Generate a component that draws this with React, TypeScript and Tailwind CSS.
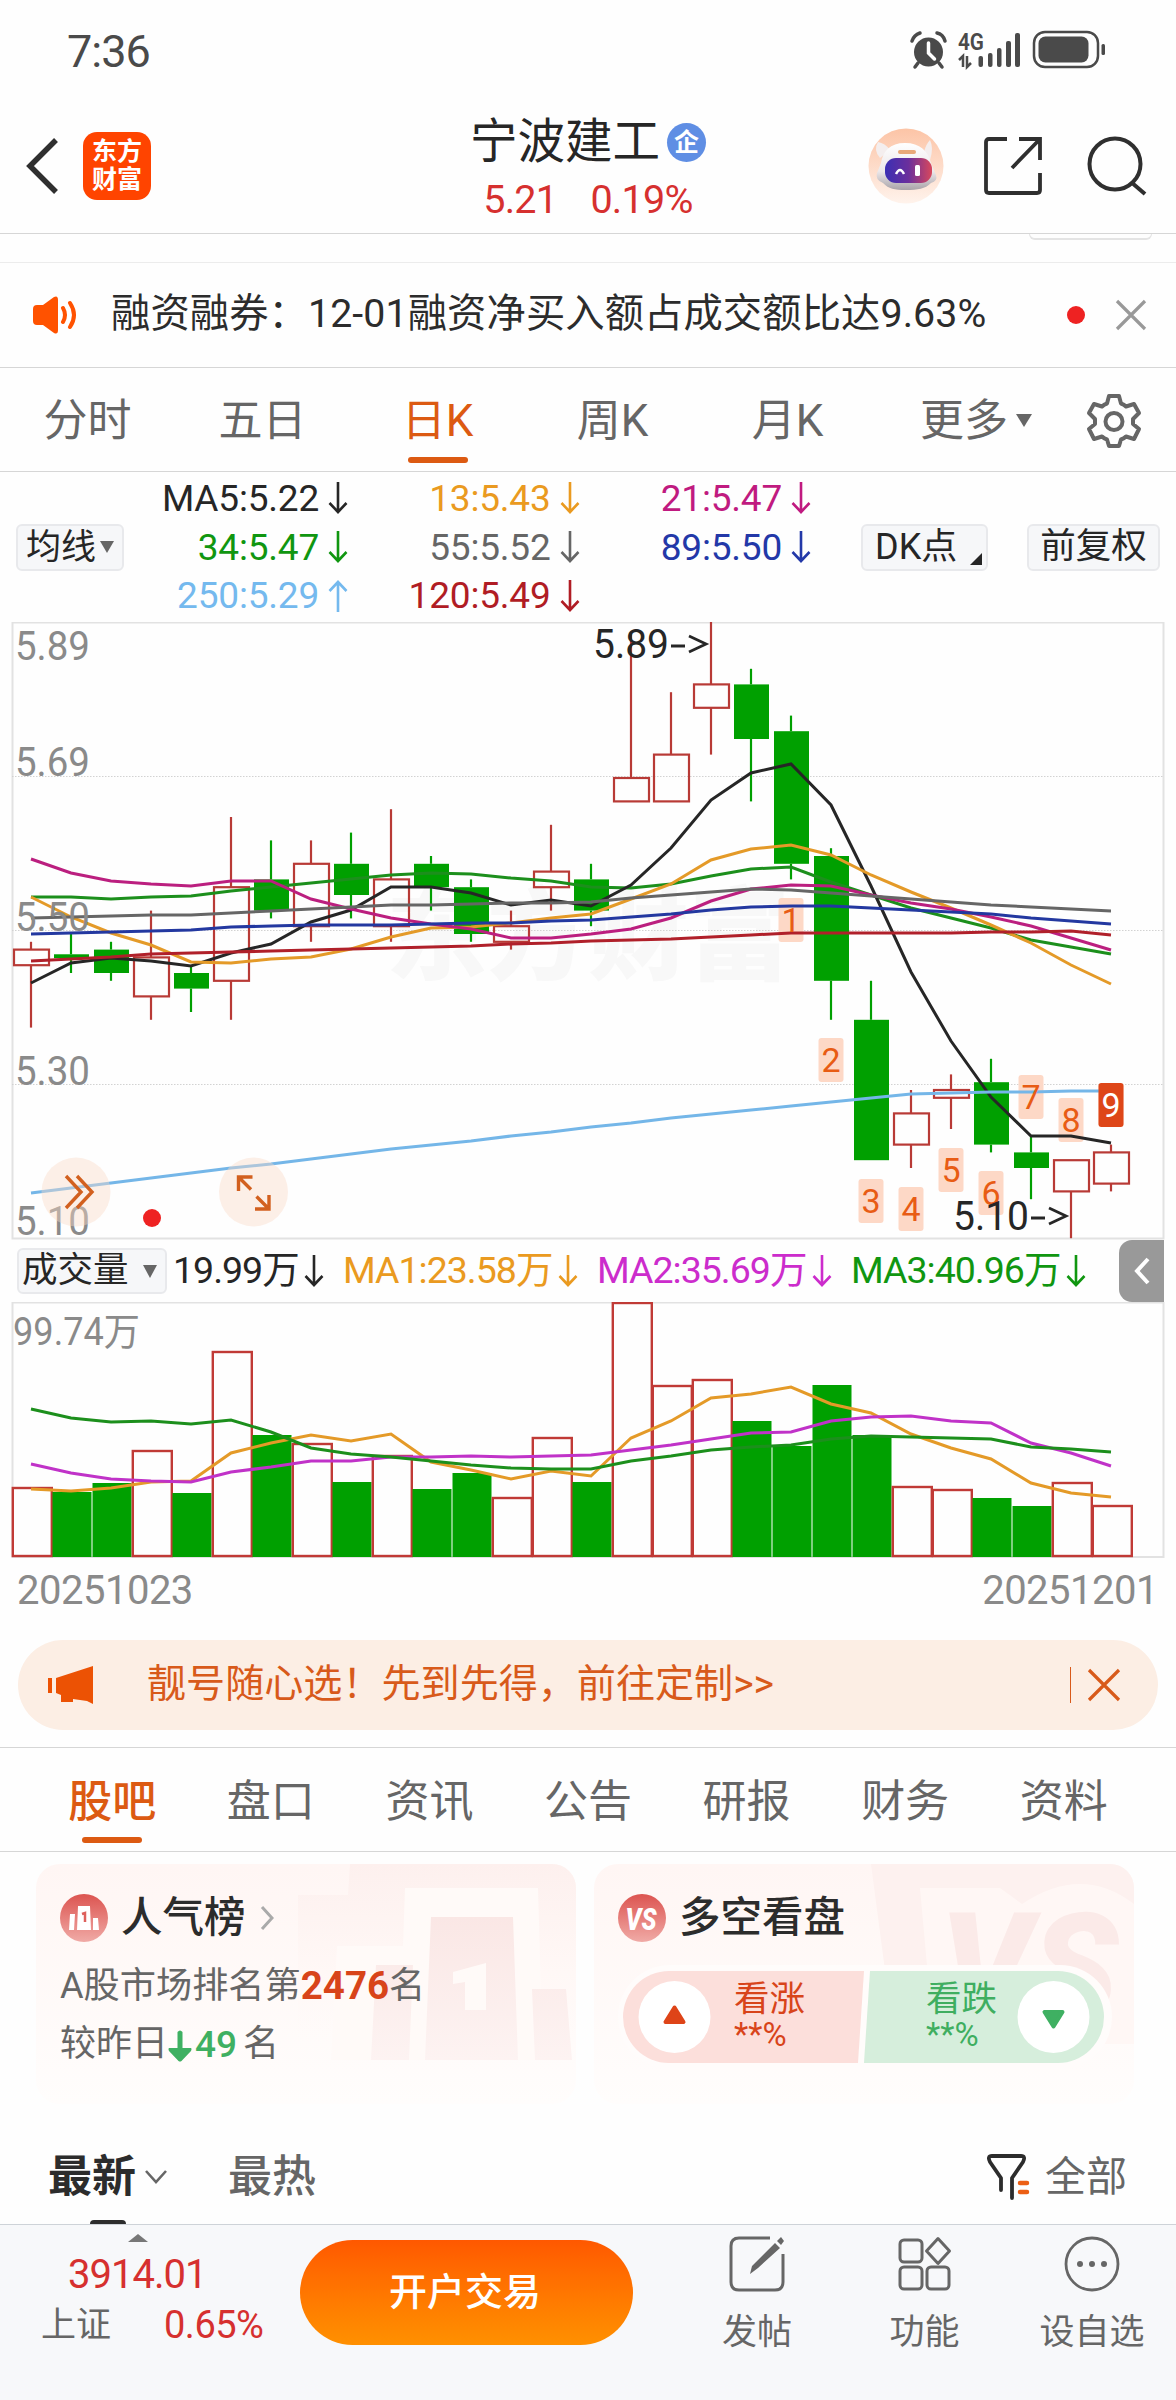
import React from 'react';

type Direction = 'up' | 'down';

interface Candle {
  open: number;
  close: number;
  high: number;
  low: number;
  volTop: number;
}

const STEP = 40;
const PRICE_TOP = 5.89;
const PX_PER_PRICE = 780;

const RED = '#b83a36';
const GREEN = '#00a000';

// [open, close, high, low, top of the volume bar]
const rawCandles: number[][] = [
  [5.45, 5.47, 5.48, 5.37, 186],
  [5.464, 5.459, 5.49, 5.44, 190],
  [5.47, 5.44, 5.48, 5.43, 181],
  [5.41, 5.46, 5.52, 5.38, 149],
  [5.44, 5.42, 5.45, 5.39, 191],
  [5.43, 5.55, 5.64, 5.38, 50],
  [5.56, 5.52, 5.61, 5.51, 133],
  [5.5, 5.58, 5.61, 5.48, 142],
  [5.58, 5.54, 5.62, 5.51, 180],
  [5.5, 5.56, 5.65, 5.48, 154],
  [5.58, 5.55, 5.59, 5.52, 187],
  [5.55, 5.49, 5.56, 5.48, 171],
  [5.48, 5.5, 5.52, 5.47, 196],
  [5.55, 5.57, 5.63, 5.52, 136],
  [5.56, 5.52, 5.58, 5.5, 180],
  [5.66, 5.69, 5.875, 5.66, 1],
  [5.66, 5.72, 5.8, 5.66, 84],
  [5.78, 5.81, 5.89, 5.72, 78],
  [5.81, 5.74, 5.83, 5.66, 119],
  [5.75, 5.58, 5.77, 5.56, 144],
  [5.59, 5.43, 5.6, 5.38, 83],
  [5.38, 5.2, 5.43, 5.2, 133],
  [5.22, 5.26, 5.29, 5.19, 185],
  [5.28, 5.29, 5.31, 5.24, 188],
  [5.3, 5.22, 5.33, 5.21, 196],
  [5.21, 5.19, 5.23, 5.15, 204],
  [5.16, 5.2, 5.2, 5.1, 181],
  [5.17, 5.21, 5.22, 5.16, 204],
];

const candles: Candle[] = rawCandles.map(([open, close, high, low, volTop]) => ({ open, close, high, low, volTop }));

const priceLines: { color: string; ys: number[] }[] = [
  { color: '#1c8f1c', ys: [275, 275, 277, 275, 274, 269, 265, 261, 257, 253, 251, 252, 256, 259, 265, 266, 262, 254, 247, 245, 260, 273, 286, 296, 306, 318, 325, 332] },
  { color: '#262626', ys: [361, 341, 336, 339, 344, 331, 322, 300, 288, 265, 265, 271, 283, 278, 284, 263, 226, 178, 151, 142, 183, 264, 350, 419, 475, 514, 514, 521] },
  { color: '#e49a28', ys: [275, 295, 311, 323, 340, 341, 337, 335, 327, 315, 306, 305, 301, 296, 292, 277, 262, 238, 227, 223, 233, 253, 270, 286, 303, 321, 343, 362] },
  { color: '#bb1f7f', ys: [237, 251, 259, 262, 264, 259, 259, 277, 287, 296, 302, 307, 316, 316, 312, 307, 296, 279, 267, 263, 264, 273, 281, 287, 295, 304, 316, 328] },
  { color: '#666666', ys: [296, 295, 294, 293, 293, 291, 289, 287, 285, 283, 283, 282, 281, 281, 280, 276, 273, 270, 267, 268, 271, 274, 277, 280, 283, 285, 287, 289] },
  { color: '#2338a0', ys: [312, 311, 310, 309, 308, 305, 304, 303, 303, 303, 302, 301, 301, 299, 298, 295, 292, 288, 285, 284, 284, 286, 288, 290, 292, 296, 299, 302] },
  { color: '#b0202a', ys: [339, 337, 335, 332, 331, 330, 329, 328, 327, 326, 325, 324, 322, 321, 319, 318, 317, 315, 313, 311, 311, 311, 311, 311, 310, 310, 309, 313] },
  { color: '#74b6e8', ys: [571, 566, 561, 556, 551, 546, 542, 537, 532, 527, 523, 519, 514, 510, 505, 501, 496, 492, 488, 484, 480, 476, 472, 471, 470, 470, 469, 469] },
];

const volumeLines: { color: string; ys: number[] }[] = [
  { color: '#e49a28', ys: [187, 189, 186, 180, 179, 151, 141, 133, 139, 132, 160, 168, 177, 169, 174, 136, 119, 96, 92, 85, 102, 111, 132, 146, 157, 181, 191, 195] },
  { color: '#c032c8', ys: [162, 171, 177, 179, 180, 170, 165, 159, 159, 155, 155, 154, 155, 154, 153, 148, 143, 137, 131, 130, 119, 115, 114, 119, 121, 141, 151, 164] },
  { color: '#1c8f1c', ys: [107, 116, 120, 119, 122, 118, 130, 146, 152, 155, 159, 163, 166, 167, 167, 159, 154, 148, 145, 143, 137, 134, 135, 136, 137, 145, 147, 150] },
];

// Sequence marks under / over the candles: index of the candle and top edge
const marks = [
  { n: 1, i: 19, y: 276 },
  { n: 2, i: 20, y: 416 },
  { n: 3, i: 21, y: 557 },
  { n: 4, i: 22, y: 565 },
  { n: 5, i: 23, y: 526 },
  { n: 6, i: 24, y: 549 },
  { n: 7, i: 25, y: 453 },
  { n: 8, i: 26, y: 476 },
  { n: 9, i: 27, y: 461 },
];

const axisLabels = [
  { label: '5.89', y: 38 },
  { label: '5.69', y: 154 },
  { label: '5.50', y: 309 },
  { label: '5.30', y: 463 },
  { label: '5.10', y: 613 },
];

const cx = (i: number) => 31 + i * STEP;
const py = (p: number) => (PRICE_TOP - p) * PX_PER_PRICE;
const toPoints = (ys: number[]) => ys.map((y, i) => `${cx(i)},${y}`).join(' ');

const Arrow: React.FC<{ dir?: Direction; className?: string }> = ({ dir = 'down', className = '' }) => (
  <svg viewBox="0 0 20 32" fill="none" stroke="currentColor" strokeWidth="2.6" className={`h-8 w-5 shrink-0 ${className}`}>
    {dir === 'down' ? <path d="M10 0v30M1.500 21l8.500 9 8.500-9" /> : <path d="M10 32V2M1.500 11L10 2l8.500 9" />}
  </svg>
);

const StatusBar = () => (
  <div className="flex h-[100px] items-center justify-between pl-[67px] pr-[71px] text-[#4a4a4a]">
    <span className="pt-[2px] text-[45px] leading-none tracking-[-1px]">7:36</span>
    <svg viewBox="0 0 196 40" className="h-10 w-[196px]">
      <g fill="#4a4a4a">
        <circle cx="19.500" cy="22" r="14.500" />
        <path d="M3 11q2-6 8-8M28 3q6 1 8 8M9 33l-3 4M30 33l3 4" stroke="#4a4a4a" strokeWidth="3.500" fill="none" strokeLinecap="round" />
        <path d="M19.500 13v10l6 6" stroke="#fff" strokeWidth="3.500" fill="none" strokeLinecap="round" />
        <rect x="69.500" y="26" width="4.500" height="11" rx="2" />
        <rect x="79" y="23" width="4.500" height="14" rx="2" />
        <rect x="88" y="18" width="4.500" height="19" rx="2" />
        <rect x="97" y="11" width="5" height="26" rx="2" />
        <rect x="106" y="3" width="5" height="34" rx="2" />
        <rect x="125" y="2" width="64" height="35" rx="11" fill="none" stroke="#4a4a4a" strokeWidth="2.500" />
        <rect x="129.500" y="6.500" width="50" height="26" rx="7" />
        <rect x="192.500" y="14" width="3.500" height="11" rx="1.500" />
        <path d="M50 30l4-4v11M58 26v11l4-4" stroke="#4a4a4a" strokeWidth="2.500" fill="none" />
      </g>
      <text x="49" y="20" fontSize="23" fontWeight="600" fill="#4a4a4a" textLength="26" lengthAdjust="spacingAndGlyphs">4G</text>
    </svg>
  </div>
);

const Header = () => (
  <header className="grid h-[134px] grid-cols-[1fr_auto_1fr] items-start border-b border-[#d6d6d6]">
    <div className="flex items-center gap-[25px] pl-[26px] pt-8">
      <svg viewBox="0 0 32 56" fill="none" stroke="#2f2f2f" strokeWidth="5.500" className="h-14 w-8">
        <path d="M30 2L4 28l26 26" />
      </svg>
      <div className="flex h-[68px] w-[68px] flex-col items-center justify-center rounded-[14px] bg-[#ff4400] text-[25px] font-bold leading-[28px] text-white">
        <span>东方</span>
        <span>财富</span>
      </div>
    </div>
    <div className="flex flex-col items-center">
      <div className="flex items-center gap-[7px] pt-[18px]">
        <h1 className="text-[47.5px] leading-[48px] text-[#262626]">宁波建工</h1>
        <span className="flex h-[39px] w-[39px] items-center justify-center rounded-full bg-[#5f8ee4] text-[25px] font-bold leading-none text-white">企</span>
      </div>
      <div className="mt-[14px] flex gap-[33px] text-[39.5px] leading-10 tracking-[-0.7px] text-[#d6302f]">
        <span>5.21</span>
        <span>0.19%</span>
      </div>
    </div>
    <div className="flex items-center justify-end pr-[29px] pt-[28px]">
      <svg viewBox="0 0 76 76" className="h-[76px] w-[76px]">
        <defs>
          <linearGradient id="halo" x1="0" y1="0" x2="0" y2="1">
            <stop offset="0" stopColor="#fcc4a6" />
            <stop offset="1" stopColor="#fff3ec" />
          </linearGradient>
          <linearGradient id="shell" x1="0" y1="0" x2="0" y2="1">
            <stop offset="0" stopColor="#ffffff" />
            <stop offset="0.6" stopColor="#ece8ea" />
            <stop offset="1" stopColor="#a9a3a8" />
          </linearGradient>
          <linearGradient id="visor" x1="0" y1="0" x2="1" y2="0">
            <stop offset="0" stopColor="#3b2fb4" />
            <stop offset="0.5" stopColor="#6b2f9c" />
            <stop offset="1" stopColor="#d8485c" />
          </linearGradient>
        </defs>
        <circle cx="38" cy="38" r="37.500" fill="url(#halo)" />
        <path d="M12 30q-7-8-2-16 7 1 12 8zM56 24q2-8 6-12 4 8 0 20z" fill="#f4eeee" />
        <path d="M37 15c15 0 23 8 26 20l5 12q2 6-5 8c-6 6-13 7-25 7s-17-1-23-7q-8-3-6-10l4-10c2-12 9-20 24-20z" fill="url(#shell)" />
        <rect x="17" y="30" width="47" height="25" rx="11" fill="url(#visor)" />
        <path d="M28 46q4-8 8 0" stroke="#fff" strokeWidth="2.500" fill="none" />
        <rect x="47" y="37" width="5" height="11" rx="1.500" fill="#fff" />
        <rect x="30" y="22" width="18" height="4" rx="2" fill="#e8a878" />
      </svg>
      <svg viewBox="0 0 58 58" fill="none" stroke="#2f2f2f" strokeWidth="3.800" className="ml-[40px] h-[58px] w-[58px]">
        <path d="M23 2H5q-3 0-3 3v48q0 3 3 3h48q3 0 3-3V36M35 2h21v21M56 2L28 31" />
      </svg>
      <svg viewBox="0 0 60 60" fill="none" stroke="#2f2f2f" strokeWidth="4" className="ml-[45px] h-[60px] w-[60px]">
        <circle cx="28" cy="28" r="25.500" />
        <path d="M44 46l14 12" />
      </svg>
    </div>
  </header>
);

const NoticeBar = () => (
  <div className="flex h-[105px] items-center border-b border-[#d6d6d6] pl-[33px] pr-[29px]">
    <svg viewBox="0 0 46 38" className="h-[38px] w-[46px]">
      <path d="M4 9h6L21 1q4-2 4 3v30q0 5-4 3L10 29H4q-4 0-4-4V13q0-4 4-4z" fill="#ff5200" />
      <path d="M30 12q4 7 0 14M37 7q8 12 0 24" fill="none" stroke="#ff5200" strokeWidth="4" strokeLinecap="round" />
    </svg>
    <p className="ml-8 whitespace-nowrap text-[39.3px] leading-none tracking-[0.1px] text-[#2c2c2c]">融资融券：12-01融资净买入额占成交额比达9.63%</p>
    <span className="ml-auto h-[18px] w-[18px] rounded-full bg-[#ee2222]" />
    <svg viewBox="0 0 32 32" fill="none" stroke="#999" strokeWidth="3.200" className="ml-[30px] h-8 w-8">
      <path d="M2 2l28 28M30 2L2 30" />
    </svg>
  </div>
);

const periods = ['分时', '五日', '日K', '周K', '月K'];

const PeriodTabs = () => (
  <nav className="flex h-[104px] items-stretch border-b border-[#d6d6d6] text-[44px] leading-none text-[#666]">
    {periods.map((p) => {
      const active = p === '日K';
      return (
        <div key={p} className={`relative flex w-[175px] items-center justify-center pt-[2px] ${active ? 'text-[#dc5a12]' : ''}`}>
          <span>{p}</span>
          {active && <span className="absolute bottom-2 h-[6px] w-[60px] rounded-full bg-[#dc5a12]" />}
        </div>
      );
    })}
    <div className="flex flex-1 items-center pl-[45px] pt-[2px]">
      <span>更多</span>
      <svg viewBox="0 0 16 13" className="ml-2 h-[13px] w-4">
        <path d="M0 0h16L8 13z" fill="#666" />
      </svg>
      <svg viewBox="0 0 56 56" fill="none" stroke="#666" strokeWidth="4" strokeLinejoin="round" className="ml-[54px] h-14 w-14">
        <path d="M23 3h10l2 7.500q3 1 5 3l8-2.500 5 9-6 6v5l6 5-5 10-8-2.500q-2 2-5 3L33 53H23l-2-6.500q-3-1-5-3L8 46l-5-10 6-5v-5l-6-6 5-9 8 2.500q2-2 5-3z" />
        <circle cx="28" cy="28.500" r="8.500" />
      </svg>
    </div>
  </nav>
);

const maColumns: { text: string; color: string; dir: Direction }[][] = [
  [
    { text: 'MA5:5.22', color: 'text-[#262626]', dir: 'down' },
    { text: '34:5.47', color: 'text-[#109610]', dir: 'down' },
    { text: '250:5.29', color: 'text-[#74b9ee]', dir: 'up' },
  ],
  [
    { text: '13:5.43', color: 'text-[#ea9a20]', dir: 'down' },
    { text: '55:5.52', color: 'text-[#666666]', dir: 'down' },
    { text: '120:5.49', color: 'text-[#b01c24]', dir: 'down' },
  ],
  [
    { text: '21:5.47', color: 'text-[#c01a80]', dir: 'down' },
    { text: '89:5.50', color: 'text-[#2338a8]', dir: 'down' },
  ],
];

const MaPanel = () => (
  <div className="flex h-[150px] items-center px-4">
    <button className="flex h-[47px] w-[108px] items-center justify-center gap-1 rounded-md border-2 border-[#e8e9ec] bg-[#f6f7f9] text-[35px] leading-none text-[#262626]">
      均线
      <svg viewBox="0 0 14 12" className="h-3 w-[14px]">
        <path d="M0 0h14L7 12z" fill="#666" />
      </svg>
    </button>
    <div className="flex h-full pt-[2px]">
      {maColumns.map((col, c) => (
        <div key={c} className={c === 0 ? 'w-[224px]' : 'w-[231.5px]'}>
          {col.map((m) => (
            <div key={m.text} className={`flex h-[48.7px] items-center justify-end gap-[9px] text-[37px] leading-none tracking-[-0.2px] ${m.color}`}>
              <span>{m.text}</span>
              <Arrow dir={m.dir} />
            </div>
          ))}
        </div>
      ))}
    </div>
    <button className="relative ml-[50px] flex h-[47px] w-[127px] items-center rounded-md border-2 border-[#e8e9ec] bg-[#f6f7f9] pl-[12px] text-[36px] leading-none text-[#262626]">
      DK点
      <svg viewBox="0 0 12 12" className="absolute bottom-1 right-1 h-3 w-3">
        <path d="M12 0v12H0z" fill="#262626" />
      </svg>
    </button>
    <button className="ml-auto flex h-[47px] w-[133px] items-center justify-center whitespace-nowrap rounded-md border-2 border-[#e8e9ec] bg-[#f6f7f9] text-[35.5px] leading-none text-[#262626]">前复权</button>
  </div>
);

const KLineChart = () => (
  <svg viewBox="0 0 1176 618" className="block h-[618px] w-[1176px]">
    <text x="588" y="350" textAnchor="middle" fontSize="101" fontWeight="900" fill="#f8f8f8">东方财富</text>
    <rect x="12.500" y="0.500" width="1151" height="616" fill="none" stroke="#e2e2e2" strokeWidth="2" />
    {[154.5, 308.5, 462.5].map((y) => (
      <line key={y} x1="12" x2="1163" y1={y} y2={y} stroke="#d2d2d2" strokeDasharray="1.5 1.5" />
    ))}

    {marks.map((m) => (
      <rect key={m.n} x={cx(m.i) - 12.5} y={m.y} width="25" height="44" rx="3" fill="#fdd8c6" />
    ))}

    {candles.map((c, i) => {
      const up = c.close > c.open;
      const top = py(Math.max(c.open, c.close));
      const bottom = py(Math.min(c.open, c.close));
      return (
        <g key={i} stroke={up ? RED : GREEN} strokeWidth="2.2">
          <line x1={cx(i)} x2={cx(i)} y1={py(c.high)} y2={top} />
          <line x1={cx(i)} x2={cx(i)} y1={bottom} y2={py(c.low)} />
          {up ? (
            <rect x={cx(i) - 17} y={top} width="35" height={bottom - top} fill="none" />
          ) : (
            <rect x={cx(i) - 17} y={top} width="35" height={bottom - top} fill={GREEN} stroke="none" />
          )}
        </g>
      );
    })}

    {priceLines.map((l) => (
      <polyline key={l.color} points={toPoints(l.ys)} fill="none" stroke={l.color} strokeWidth="3" />
    ))}

    {/* mark 9 stays above the 250 line */}
    <rect x={cx(27) - 12.5} y="461" width="25" height="44" rx="3" fill="#de4618" />
    {marks.map((m) => (
      <text key={m.n} x={cx(m.i)} y={m.y + 34} textAnchor="middle" fontSize="34" fill={m.n === 9 ? '#fff' : '#e85c14'}>{m.n}</text>
    ))}

    <g fontSize="40" fill="#8a8a8a">
      {axisLabels.map((a) => (
        <text key={a.label} x="15" y={a.y} textLength="75" lengthAdjust="spacingAndGlyphs">{a.label}</text>
      ))}
    </g>
    <g fontSize="40" fill="#262626">
      <text x="593" y="36" textLength="76" lengthAdjust="spacingAndGlyphs">5.89</text>
      <text x="953" y="608" textLength="76" lengthAdjust="spacingAndGlyphs">5.10</text>
    </g>
    <path d="M671 24h14M689 14l17 8-17 8M1031 596h14M1049 586l17 8-17 8" fill="none" stroke="#262626" strokeWidth="2.800" />

    <g fill="#fbdcc8" fillOpacity="0.420">
      <circle cx="76" cy="570" r="34.500" />
      <circle cx="253.500" cy="570" r="34.500" />
    </g>
    <g fill="none" stroke="#d2601f" strokeWidth="3.400">
      <path d="M66 554l15 16-15 16M77 554l15 16-15 16" />
      <path d="M238.500 569v-14h14M239 555.500l12 12M269 573v14h-14M268.500 586.500l-12-12" />
    </g>
    <circle cx="152" cy="596" r="9" fill="#ee2222" />
  </svg>
);

const volumeLegend = [
  { text: '19.99万', color: 'text-[#262626]', width: 'w-[151px]' },
  { text: 'MA1:23.58万', color: 'text-[#ea9a20]', width: 'w-[235px]' },
  { text: 'MA2:35.69万', color: 'text-[#cc2ccc]', width: 'w-[235px]' },
  { text: 'MA3:40.96万', color: 'text-[#109610]', width: 'w-[235px]' },
];

const VolumeHeader = () => (
  <div className="flex h-[62px] items-center pl-[17px] pr-3">
    <button className="flex h-[46px] w-[150px] items-center justify-between whitespace-nowrap rounded-md border-2 border-[#e8e9ec] bg-[#f6f7f9] pl-[3px] pr-2 text-[35.5px] leading-none text-[#262626]">
      成交量
      <svg viewBox="0 0 14 13" className="h-[13px] w-[14px]">
        <path d="M0 0h14L7 13z" fill="#666" />
      </svg>
    </button>
    <div className="ml-[6px] flex gap-[19px]">
      {volumeLegend.map((v) => (
        <div key={v.text} className={`flex items-center justify-between whitespace-nowrap text-[37.5px] leading-none tracking-[-1px] ${v.color} ${v.width}`}>
          <span>{v.text}</span>
          <Arrow />
        </div>
      ))}
    </div>
    <button className="ml-auto flex h-[62px] w-[45px] items-center justify-center rounded-l-[13px] bg-[#999]">
      <svg viewBox="0 0 16 28" fill="none" stroke="#fff" strokeWidth="4" className="h-7 w-4">
        <path d="M14 2L3 14l11 12" />
      </svg>
    </button>
  </div>
);

const VolumeChart = () => (
  <svg viewBox="0 0 1176 256" className="block h-[256px] w-[1176px]">
    <rect x="12.500" y="0.500" width="1151" height="254.500" fill="none" stroke="#e2e2e2" strokeWidth="2" />
    {candles.map((c, i) => {
      const x = 12 + i * STEP;
      return c.close > c.open ? (
        <rect key={i} x={x + 0.8} y={c.volTop} width="39" height={254 - c.volTop} fill="none" stroke="#c03a36" strokeWidth="2.4" />
      ) : (
        <rect key={i} x={x + 0.5} y={c.volTop} width="39" height={255 - c.volTop} fill={GREEN} />
      );
    })}
    {volumeLines.map((l) => (
      <polyline key={l.color} points={toPoints(l.ys)} fill="none" stroke={l.color} strokeWidth="3" />
    ))}
    <text x="13" y="43" fontSize="38" fill="#8a8a8a" textLength="127" lengthAdjust="spacingAndGlyphs">99.74万</text>
  </svg>
);

const PromoBanner = () => (
  <div className="mx-[18px] mt-[22px] flex h-[90px] items-center rounded-full bg-[#fceee4] pl-[29px] pr-[37px] text-[#d85a1a]">
    <svg viewBox="0 0 48 40" className="h-10 w-12" fill="#ec5204">
      <path d="M1 13h4v15H1zM9 13L46 1v38l-6-3-14-2v3H14v-7l-5-2z" />
    </svg>
    <span className="ml-[52px] text-[39.1px] leading-none">靓号随心选！先到先得，前往定制&gt;&gt;</span>
    <span className="ml-auto h-9 w-px bg-[#d85a1a]" />
    <svg viewBox="0 0 34 34" fill="none" stroke="currentColor" strokeWidth="3.200" className="ml-4 h-[34px] w-[34px]">
      <path d="M2 2l30 30M32 2L2 32" />
    </svg>
  </div>
);

const sections = ['股吧', '盘口', '资讯', '公告', '研报', '财务', '资料'];

const SectionTabs = () => (
  <nav className="mt-[17px] grid h-[105px] grid-cols-7 border-y border-[#d6d6d6] px-[33px] text-[44px] leading-none text-[#666]">
    {sections.map((s, i) => (
      <div key={s} className={`relative flex items-center justify-center pt-1 ${i === 0 ? 'font-medium text-[#dc5a12]' : ''}`}>
        <span>{s}</span>
        {i === 0 && <span className="absolute bottom-2 h-[6px] w-[60px] rounded-full bg-[#dc5a12]" />}
      </div>
    ))}
  </nav>
);

const BadgeDefs = () => (
  <defs>
    <linearGradient id="badge" x1="0" y1="0" x2="0" y2="1">
      <stop offset="0" stopColor="#dc5450" />
      <stop offset="1" stopColor="#f0aaa6" />
    </linearGradient>
  </defs>
);

const PopularityCard = () => (
  <div className="relative h-[240px] w-[540px] overflow-hidden rounded-3xl bg-gradient-to-b from-[#fff6f4] to-[#fffdfc] pl-6 pt-[30px]">
    <svg viewBox="0 0 540 240" className="absolute inset-0 h-full w-full">
      <defs>
        <linearGradient id="podiumBack" x1="0" y1="0" x2="0" y2="1">
          <stop offset="0" stopColor="#fdf0ee" />
          <stop offset="0.6" stopColor="#fff8f6" />
          <stop offset="1" stopColor="#fffaf9" stopOpacity="0" />
        </linearGradient>
        <linearGradient id="podium" x1="0" y1="0" x2="0" y2="1">
          <stop offset="0" stopColor="#fae7e5" />
          <stop offset="1" stopColor="#fdf3f2" />
        </linearGradient>
      </defs>
      <path d="M314 0h226v180H262V31h50z" fill="url(#podiumBack)" />
      <path d="M369 24h133l5 172H295l6-114h66z" fill="#fffaf8" />
      <path d="M340 101h37l-4 95h-38zM395 53h82l5 143H389zM496 125h34l6 71h-37z" fill="url(#podium)" />
      <path d="M417 108l33-9v47h-21v-28l-12 2z" fill="#fffaf8" />
    </svg>
    <div className="relative">
      <div className="flex items-center">
        <svg viewBox="0 0 48 48" className="h-12 w-12">
          <BadgeDefs />
          <circle cx="24" cy="24" r="24" fill="url(#badge)" />
          <path d="M10 20h5l-1 16H9zM18 12h12l1 24H17zM33 24h5l1 12h-6z" fill="#fff" />
          <path d="M22 20l3-1v9" fill="none" stroke="#de605c" strokeWidth="2.500" />
        </svg>
        <h2 className="ml-[13px] text-[41.5px] font-medium leading-none text-[#2c2c2c]">人气榜</h2>
        <svg viewBox="0 0 14 24" fill="none" stroke="#aaa" strokeWidth="3" className="ml-[14px] h-6 w-[14px]">
          <path d="M2 1l10 11L2 23" />
        </svg>
      </div>
      <p className="mt-[19px] flex h-[50px] items-center text-[36.2px] leading-none text-[#666]">
        A股市场排名第<b className="text-[38.5px] text-[#d8441a]">2476</b>名
      </p>
      <p className="mt-2 flex h-[50px] items-center text-[36px] leading-none text-[#666]">
        较昨日
        <svg viewBox="0 0 24 32" className="mt-1 h-8 w-6">
          <path d="M9.500 2q2.500-3 5 0v16H23q1 1 0 3L13.500 31q-1.500 1-3 0L1 21q-1-2 0-3h8.500z" fill="#3fb062" />
        </svg>
        <span className="ml-[3px] text-[37px] font-medium text-[#3fb062]">49</span>
        <span className="ml-[6px]">名</span>
      </p>
    </div>
  </div>
);

const SentimentCard = () => (
  <div className="relative h-[240px] w-[540px] overflow-hidden rounded-3xl bg-gradient-to-b from-[#fff6f4] to-[#fffdfc] pl-6 pt-[30px]">
    <svg viewBox="0 0 540 240" className="absolute inset-0 h-full w-full">
      <path d="M277 0h263v175H300z" fill="#fdf1ef" />
      <path d="M326 24h80l22 16q60-40 112 0v140H340z" fill="#fff7f5" />
      <text x="346" y="154" fontSize="148" fontWeight="900" fontStyle="italic" fill="#fbeae8" textLength="178" lengthAdjust="spacingAndGlyphs">VS</text>
    </svg>
    <div className="relative flex items-center">
      <svg viewBox="0 0 48 48" className="h-12 w-12">
        <circle cx="24" cy="24" r="24" fill="url(#badge)" />
        <text x="23" y="36" textAnchor="middle" fontSize="32" fontWeight="900" fontStyle="italic" fill="#fff" textLength="31" lengthAdjust="spacingAndGlyphs">VS</text>
      </svg>
      <h2 className="ml-[13px] text-[41.5px] font-medium leading-none text-[#2c2c2c]">多空看盘</h2>
    </div>
    <div className="relative mt-[23px] h-[104px] w-[494px]">
      <svg viewBox="0 0 494 104" className="absolute inset-0 h-full w-full">
        <rect x="0" y="0" width="494" height="104" rx="52" fill="#fffcfb" />
        <path d="M51 6h195l-6 92H51a46 46 0 010-92z" fill="#fcdfdb" />
        <path d="M252 6h188a46 46 0 010 92H246z" fill="#d6eedc" />
        <circle cx="56.500" cy="52" r="36" fill="#fff" />
        <circle cx="435.500" cy="52" r="36" fill="#fff" />
        <path d="M56.500 42.500l9 14.500h-18z" fill="#de4418" stroke="#de4418" strokeWidth="4" strokeLinejoin="round" />
        <path d="M435.500 61.500l-9-14.500h18z" fill="#3fb062" stroke="#3fb062" strokeWidth="4" strokeLinejoin="round" />
      </svg>
      <div className="relative flex pl-[116px] pt-[16px] text-[35.5px]">
        <div className="w-[192px] text-[#d8441a]">
          <p className="leading-[36px]">看涨</p>
          <p className="text-[33px] leading-[36px]">**%</p>
        </div>
        <div className="text-[#3fae60]">
          <p className="leading-[36px]">看跌</p>
          <p className="text-[33px] leading-[36px]">**%</p>
        </div>
      </div>
    </div>
  </div>
);

const SortRow = () => (
  <div className="relative flex h-[120px] items-center pl-[48px] pr-[49px] pt-[26px] leading-none">
    <span className="text-[44px] font-bold text-[#2c2c2c]">最新</span>
    <svg viewBox="0 0 22 14" fill="none" stroke="#666" strokeWidth="2.600" className="ml-[9px] h-[14px] w-[22px]">
      <path d="M1 1l10 11L21 1" />
    </svg>
    <span className="ml-[61px] text-[44px] font-medium text-[#666]">最热</span>
    <svg viewBox="0 0 44 46" fill="none" stroke="#2c2c2c" strokeWidth="3.800" strokeLinecap="round" strokeLinejoin="round" className="ml-auto h-[46px] w-11">
      <path d="M15 36V24L4 8q-3-6 2-6h29q5 0 2 6L26 24v20" />
      <path d="M34 29h7M34 38h7" stroke="#ec5f14" strokeWidth="4.500" />
    </svg>
    <span className="ml-[15px] text-[41px] text-[#666]">全部</span>
    <span className="absolute bottom-0 left-[90px] h-1 w-9 rounded-t bg-[#2c2c2c]" />
  </div>
);

const BottomBar = () => (
  <footer className="flex h-[176px] border-t border-[#ced3d8] bg-[#f7f8fa]">
    <div className="w-[300px] pt-[9px]">
      <svg viewBox="0 0 20 8" className="ml-[128px] h-2 w-5">
        <path d="M10 0l10 8H0z" fill="#777" />
      </svg>
      <p className="ml-[68px] mt-[13px] text-[40px] leading-10 tracking-[-1px] text-[#d6302f]">3914.01</p>
      <p className="ml-[41px] mt-[10px] flex h-10 items-center leading-none">
        <span className="text-[35px] text-[#666]">上证</span>
        <span className="ml-[53px] text-[38px] tracking-[-0.5px] text-[#d6302f]">0.65%</span>
      </p>
    </div>
    <button className="mt-[15px] h-[105px] w-[333px] rounded-full bg-gradient-to-b from-[#ff5800] to-[#ff9000] pr-[3px] text-[38px] font-medium text-white">开户交易</button>
    <div className="ml-[40px] flex text-[35px] leading-none text-[#666]">
      <div className="flex w-[168px] flex-col items-center pt-[11px]">
        <svg viewBox="0 0 56 56" fill="none" stroke="#666" strokeWidth="3" className="h-14 w-14">
          <path d="M41 2H10q-8 0-8 8v36q0 8 8 8h36q8 0 8-8V18" />
          <path d="M21 38l2-8L46 7l5 5-22 20zM48 5l4-4 3 4-3 4z" fill="#666" stroke="none" />
        </svg>
        <span className="mt-[23px]">发帖</span>
      </div>
      <div className="flex w-[167px] flex-col items-center pt-[11px]">
        <svg viewBox="0 0 54 56" fill="none" stroke="#666" strokeWidth="3" className="h-14 w-[54px]">
          <rect x="2" y="4" width="22" height="22" rx="4" />
          <rect x="2" y="31" width="22" height="22" rx="4" />
          <rect x="29" y="31" width="22" height="22" rx="4" />
          <path d="M40 2.500L51.500 15 40 27.500 28.500 15z" strokeLinejoin="round" />
        </svg>
        <span className="mt-[23px]">功能</span>
      </div>
      <div className="flex w-[168px] flex-col items-center pt-[11px]">
        <svg viewBox="0 0 58 58" fill="none" stroke="#666" strokeWidth="2.800" className="h-[58px] w-[58px]">
          <circle cx="29" cy="28" r="26" />
          <g fill="#666" stroke="none">
            <circle cx="17" cy="28" r="3" />
            <circle cx="29" cy="28" r="3" />
            <circle cx="41" cy="28" r="3" />
          </g>
        </svg>
        <span className="mt-[21px]">设自选</span>
      </div>
    </div>
  </footer>
);

const App: React.FC = () => {
  return (
    <div className="flex h-[2400px] w-[1176px] flex-col overflow-hidden bg-[#fefefe] font-[Roboto,'Noto_Sans_CJK_SC',sans-serif] font-normal">
      <StatusBar />
      <Header />
      <div className="h-[29px] border-b border-[#ececec]">
        <div className="ml-[1029px] h-[6px] w-[123px] rounded-b-md border border-b-2 border-t-0 border-[#e4e4e4]" />
      </div>
      <NoticeBar />
      <PeriodTabs />
      <MaPanel />
      <KLineChart />
      <VolumeHeader />
      <VolumeChart />
      <div className="flex h-[60px] items-center justify-between pl-[17px] pr-[18px] pt-[5px] text-[40px] leading-none tracking-[-0.5px] text-[#8a8a8a]">
        <span>20251023</span>
        <span>20251201</span>
      </div>
      <PromoBanner />
      <SectionTabs />
      <div className="mt-3 flex gap-[18px] pl-9">
        <PopularityCard />
        <SentimentCard />
      </div>
      <SortRow />
      <BottomBar />
    </div>
  );
};

export default App;
